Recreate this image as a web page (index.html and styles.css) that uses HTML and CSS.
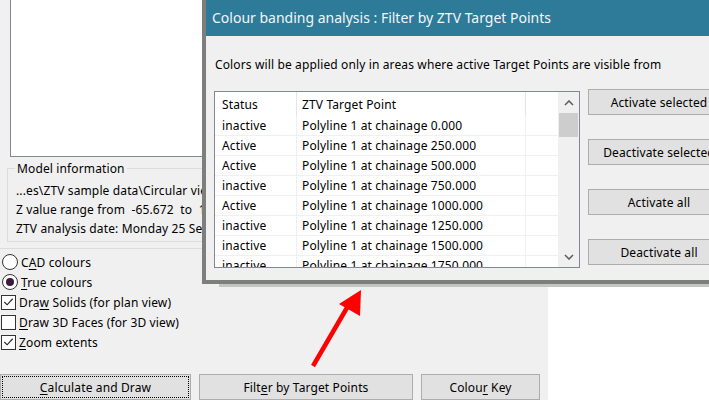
FILE: index.html
```html
<!DOCTYPE html>
<html>
<head>
<meta charset="utf-8">
<link rel="stylesheet" href="styles.css">
</head>
<body>
<div class="main">
  <div class="preview"></div>
  <div class="group">
    <div class="legend">Model information</div>
    <div class="info">
      <div class="line">...es\ZTV sample data\Circular view test 1.ztv</div>
      <div class="line">Z value range from&nbsp; -65.672&nbsp; to&nbsp; 120.000</div>
      <div class="line">ZTV analysis date: Monday 25 September 2017</div>
    </div>
  </div>
  <div class="sep"></div>
  <div class="options">
    <div class="opt"><span class="radio"></span><span class="rlabel">C<u>A</u>D colours</span></div>
    <div class="opt"><span class="radio on"></span><span class="rlabel"><u>T</u>rue colours</span></div>
    <div class="opt"><span class="check"><svg width="14" height="14" viewBox="0 0 14 14"><path d="M2.5 7 L5.5 10 L11.5 3.5" fill="none" stroke="#222" stroke-width="1.2"/></svg></span><span class="clabel">Dra<u>w</u> Solids (for plan view)</span></div>
    <div class="opt"><span class="check"></span><span class="clabel"><u>D</u>raw 3D Faces (for 3D view)</span></div>
    <div class="opt"><span class="check"><svg width="14" height="14" viewBox="0 0 14 14"><path d="M2.5 7 L5.5 10 L11.5 3.5" fill="none" stroke="#222" stroke-width="1.2"/></svg></span><span class="clabel"><u>Z</u>oom extents</span></div>
  </div>
  <div class="actions">
    <div class="btn calc"><span class="focusring"></span><span><u>C</u>alculate and Draw</span></div>
    <div class="btn filter"><span>Filt<u>e</u>r by Target Points</span></div>
    <div class="btn key"><span>Colou<u>r</u> Key</span></div>
  </div>
</div>

<div class="dialog">
  <div class="titlebar">Colour banding analysis : Filter by ZTV Target Points</div>
  <div class="dbody">
    <div class="hint">Colors will be applied only in areas where active Target Points are visible from</div>
    <div class="drow">
      <div class="list">
        <div class="grid">
          <div class="head">
            <div class="c1">Status</div><div class="c2">ZTV Target Point</div><div class="c3"></div>
          </div>
          <div class="row"><div class="c1">inactive</div><div class="c2">Polyline 1 at chainage 0.000</div><div class="c3"></div></div>
          <div class="row"><div class="c1">Active</div><div class="c2">Polyline 1 at chainage 250.000</div><div class="c3"></div></div>
          <div class="row"><div class="c1">Active</div><div class="c2">Polyline 1 at chainage 500.000</div><div class="c3"></div></div>
          <div class="row"><div class="c1">inactive</div><div class="c2">Polyline 1 at chainage 750.000</div><div class="c3"></div></div>
          <div class="row"><div class="c1">Active</div><div class="c2">Polyline 1 at chainage 1000.000</div><div class="c3"></div></div>
          <div class="row"><div class="c1">inactive</div><div class="c2">Polyline 1 at chainage 1250.000</div><div class="c3"></div></div>
          <div class="row"><div class="c1">inactive</div><div class="c2">Polyline 1 at chainage 1500.000</div><div class="c3"></div></div>
          <div class="row"><div class="c1">inactive</div><div class="c2">Polyline 1 at chainage 1750.000</div><div class="c3"></div></div>
        </div>
        <div class="scroll">
          <div class="arrow"><svg width="10" height="6" viewBox="0 0 10 6"><path d="M1 5 L5 1 L9 5" fill="none" stroke="#606060" stroke-width="1.6"/></svg></div>
          <div class="thumb"></div>
          <div class="track"></div>
          <div class="arrow"><svg width="10" height="6" viewBox="0 0 10 6"><path d="M1 1 L5 5 L9 1" fill="none" stroke="#606060" stroke-width="1.6"/></svg></div>
        </div>
      </div>
      <div class="side">
        <div class="btn sbtn"><span>Activate selected</span></div>
        <div class="btn sbtn"><span>Deactivate selected</span></div>
        <div class="btn sbtn"><span>Activate all</span></div>
        <div class="btn sbtn"><span>Deactivate all</span></div>
      </div>
    </div>
  </div>
</div>

<svg class="redarrow" width="709" height="400" viewBox="0 0 709 400">
  <line x1="313" y1="366" x2="348" y2="306" stroke="#ff0000" stroke-width="4.5"/>
  <polygon points="361,290 339,304 360,316" fill="#ff0000"/>
</svg>
</body>
</html>
```
FILE: styles.css
```css
* { box-sizing: border-box; }
html, body { margin: 0; padding: 0; }
body {
  width: 709px;
  height: 400px;
  overflow: hidden;
  background: #ffffff;
  position: relative;
  font-family: "Noto Sans", "DejaVu Sans", sans-serif;
  font-size: 12px;
  letter-spacing: 0.13px;
  color: #000;
}
u { text-decoration: underline; text-underline-offset: 2px; }

.main {
  width: 548px;
  height: 400px;
  background: #f0f0f0;
  display: flex;
  flex-direction: column;
}
.preview {
  margin-left: 10px;
  width: 260px;
  height: 157px;
  background: #fff;
  border: 1px solid #828790;
  border-top: none;
  flex: none;
}
.group {
  margin: 11px 0 0 7px;
  height: 74px;
  border: 1px solid #dcdcdc;
  border-right: none;
  flex: none;
}
.legend {
  width: max-content;
  margin: -10px 0 0 7px;
  padding: 0 2px;
  height: 18px;
  line-height: 19px;
  background: #f0f0f0;
}
.info { margin-top: 4px; padding-left: 8px; white-space: nowrap; }
.line { height: 19px; line-height: 20px; }
.sep { margin-top: 6px; height: 1px; background: #dcdcdc; flex: none; }

.options { margin-top: 3px; display: flex; flex-direction: column; }
.opt { height: 20px; display: flex; align-items: center; white-space: nowrap; }
.radio {
  width: 16px; height: 16px; margin-left: 2px; margin-right: 3px;
  border: 1px solid #333; border-radius: 50%; background: #fff;
  display: flex; align-items: center; justify-content: center;
}
.radio.on::after {
  content: ""; width: 8px; height: 8px; border-radius: 50%; background: #3d1a3c;
}
.check {
  width: 15px; height: 15px; margin-left: 1px; margin-right: 3px;
  border: 1px solid #333; background: #fff;
  display: flex; align-items: center; justify-content: center;
}
.check svg { display: block; }

.actions { margin-top: 22px; display: flex; gap: 8px; }
.btn {
  height: 26px;
  background: #e1e1e1;
  border: 1px solid #adadad;
  display: flex; align-items: center; justify-content: center;
  white-space: nowrap;
  position: relative;
}
.calc { width: 191px; }
.filter { width: 214px; }
.key { width: 119px; }
.focusring {
  position: absolute; left: 1px; top: 1px; right: 1px; bottom: 1px;
  border: 1px dotted #000;
}

/* dialog */
.dialog {
  position: absolute;
  left: 202px;
  top: 0;
  width: 560px;
  height: 284px;
  background: #f0f0f0;
  border-left: 4px solid #7d7f7d;
  border-bottom: 4px solid #7d7f7d;
  box-shadow: 17px 3px 0 #c4c4c4;
  display: flex;
  flex-direction: column;
}
.titlebar {
  height: 36px;
  background: #2d7b99;
  color: #f2f6f8;
  font-size: 14px;
  letter-spacing: 0;
  line-height: 35px;
  padding-left: 6px;
  white-space: nowrap;
  flex: none;
}
.dbody { padding: 20px 0 0 8px; }
.hint { height: 16px; line-height: 17px; padding-left: 1px; white-space: nowrap; }
.drow { margin-top: 17px; display: flex; align-items: flex-start; gap: 8px; }
.list {
  margin-top: 2px;
  width: 366px;
  height: 177px;
  border: 1px solid #828790;
  background: #fff;
  display: flex;
  overflow: hidden;
  flex: none;
}
.grid { flex: 1; overflow: hidden; }
.head, .row { display: flex; white-space: nowrap; }
.head { height: 24px; line-height: 25px; }
.row { height: 20px; line-height: 20px; border-bottom: 1px solid #f0f0f0; }
.c1 { width: 82px; padding-left: 7px; border-right: 1px solid #f0f0f0; flex: none; }
.c2 { width: 229px; padding-left: 5px; border-right: 1px solid #f0f0f0; flex: none; }
.c3 { flex: 1; }
.head .c1, .head .c2 { border-right-color: #e5e5e5; }
.scroll {
  width: 21px;
  background: #f0f0f0;
  display: flex;
  flex-direction: column;
  flex: none;
}
.arrow { height: 21px; display: flex; align-items: center; justify-content: center; flex: none; }
.arrow svg { display: block; }
.thumb { height: 24px; margin: 0 1px 0 1px; background: #cdcdcd; flex: none; }
.track { flex: 1; }

.side { display: flex; flex-direction: column; gap: 24px; }
.sbtn { width: 142px; }

.redarrow { position: absolute; left: 0; top: 0; pointer-events: none; }
```
